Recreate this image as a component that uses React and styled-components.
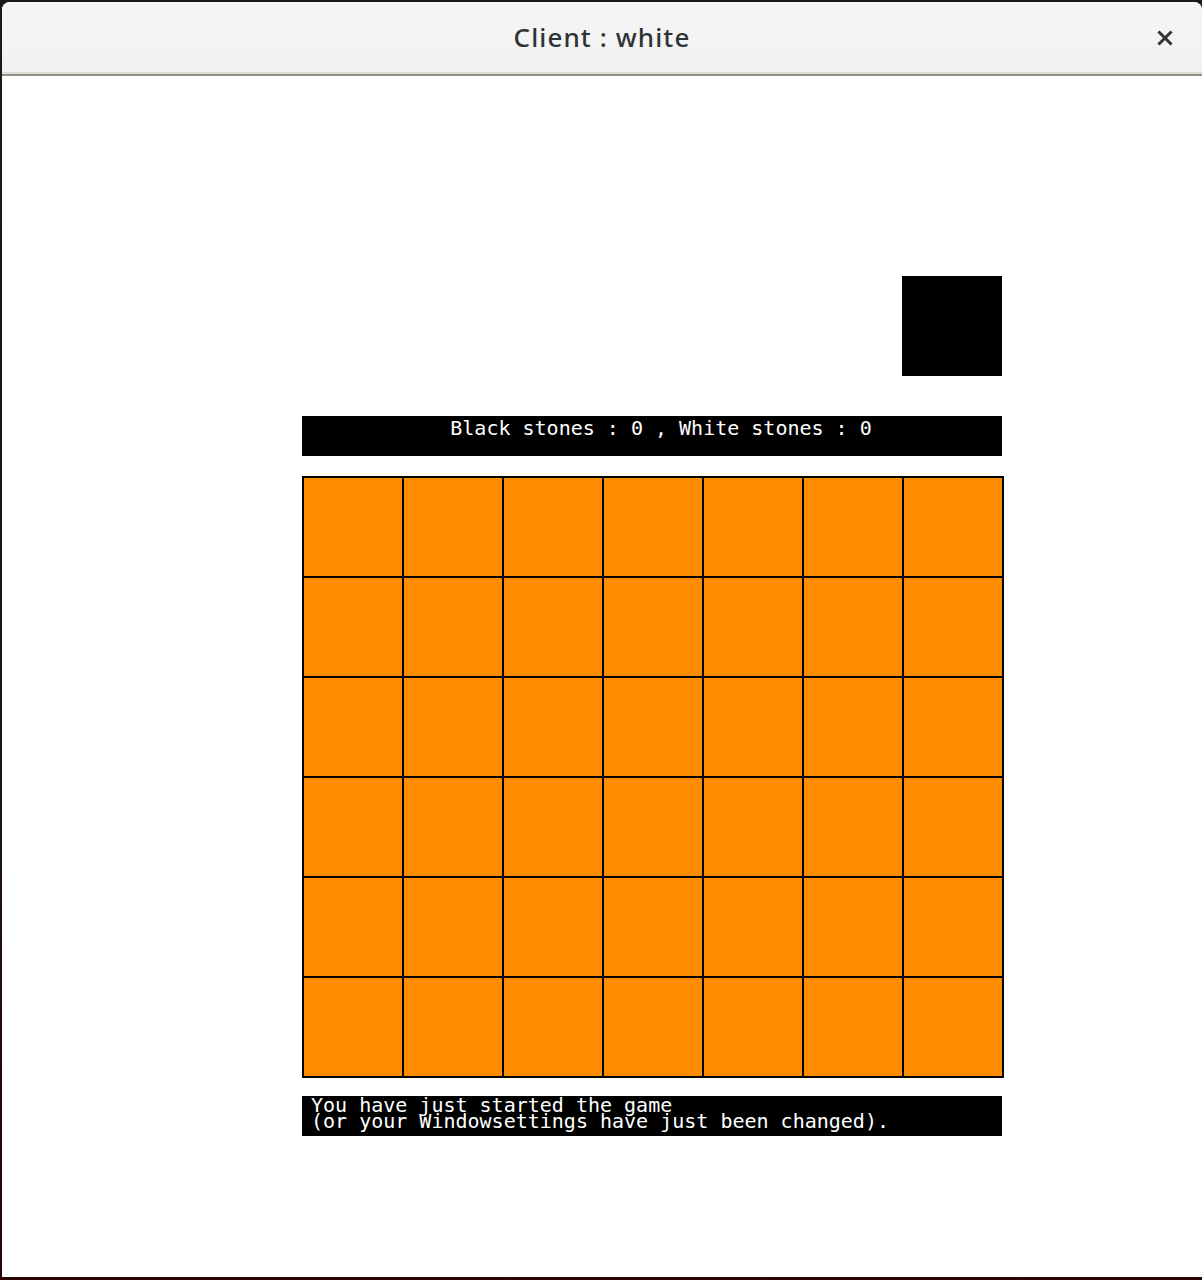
import React from "react";
import styled, { createGlobalStyle } from "styled-components";

const GlobalStyle = createGlobalStyle`
  html, body {
    margin: 0;
    padding: 0;
  }
  body {
    background: #161a1a;
  }
`;

const Screen = styled.div`
  width: 1202px;
  height: 1280px;
  box-sizing: border-box;
  padding: 2px 0 3px 2px;
  display: flex;
  background: linear-gradient(#171b1b 0%, #1c1212 60%, #2a0303 100%);
`;

const Window = styled.div`
  flex: 1;
  display: flex;
  flex-direction: column;
  background: #ffffff;
  border-radius: 8px 8px 0 0;
  overflow: hidden;
`;

const TitleBar = styled.div`
  height: 70px;
  flex-shrink: 0;
  position: relative;
  display: flex;
  align-items: center;
  justify-content: center;
  background: linear-gradient(#f5f5f5, #f2f2f2);
  border-bottom: 2px solid #dcdcd7;
`;

const TitleRule = styled.div`
  height: 2px;
  background: #8f8f88;
`;

const Title = styled.div`
  font-family: "Noto Sans", "Open Sans", sans-serif;
  font-size: 26px;
  font-weight: 500;
  color: #2e3436;
  letter-spacing: 1.1px;
  margin-top: -1px;
`;

const CloseButton = styled.div`
  position: absolute;
  right: 29px;
  top: 28px;
  width: 16px;
  height: 16px;
  display: flex;
`;

const Content = styled.div`
  flex: 1;
  padding: 200px 0 0 300px;
`;

const Column = styled.div`
  width: 700px;
  display: flex;
  flex-direction: column;
`;

const Turn = styled.div`
  align-self: flex-end;
  width: 100px;
  height: 100px;
  background: ${({ $stone }) => ($stone === "white" ? "#ffffff" : "#000000")};
`;

const Bar = styled.div`
  height: 40px;
  background: #000;
  color: #fff;
  font-family: "DejaVu Sans Mono", "Liberation Mono", monospace;
  font-size: 20px;
  white-space: pre;
  margin-top: ${({ $gap }) => $gap}px;
`;

const Score = styled(Bar)`
  text-align: center;
  line-height: 24px;
  padding-left: 18px;
`;

const Message = styled(Bar)`
  line-height: 16px;
  padding: 1px 0 0 9px;
  box-sizing: border-box;
`;

const Board = styled.div`
  margin-top: 20px;
  width: 702px;
  display: grid;
  grid-template-columns: repeat(${({ $cols }) => $cols}, 98px);
  grid-auto-rows: 98px;
  gap: 2px;
  padding: 2px;
  box-sizing: border-box;
  background: #000;
`;

const Cell = styled.div`
  background: #ff8c00;
`;

const COLS = 7;
const ROWS = 6;

export default function App() {
  const cells = Array.from({ length: COLS * ROWS });
  return (
    <>
      <GlobalStyle />
      <Screen>
        <Window>
          <TitleBar>
            <Title>Client : white</Title>
            <CloseButton>
              <svg width="16" height="16" viewBox="0 0 16 16">
                <path
                  d="M2.5 2.5 L13.5 13.5 M13.5 2.5 L2.5 13.5"
                  stroke="#2e3436"
                  strokeWidth="3"
                  strokeLinecap="square"
                />
              </svg>
            </CloseButton>
          </TitleBar>
          <TitleRule />
          <Content>
            <Column>
              <Turn $stone="black" />
              <Score $gap={40}>Black stones : 0 , White stones : 0</Score>
              <Board $cols={COLS}>
                {cells.map((_, i) => (
                  <Cell key={i} />
                ))}
              </Board>
              <Message $gap={18}>
                {"You have just started the game\n(or your Windowsettings have just been changed)."}
              </Message>
            </Column>
          </Content>
        </Window>
      </Screen>
    </>
  );
}
